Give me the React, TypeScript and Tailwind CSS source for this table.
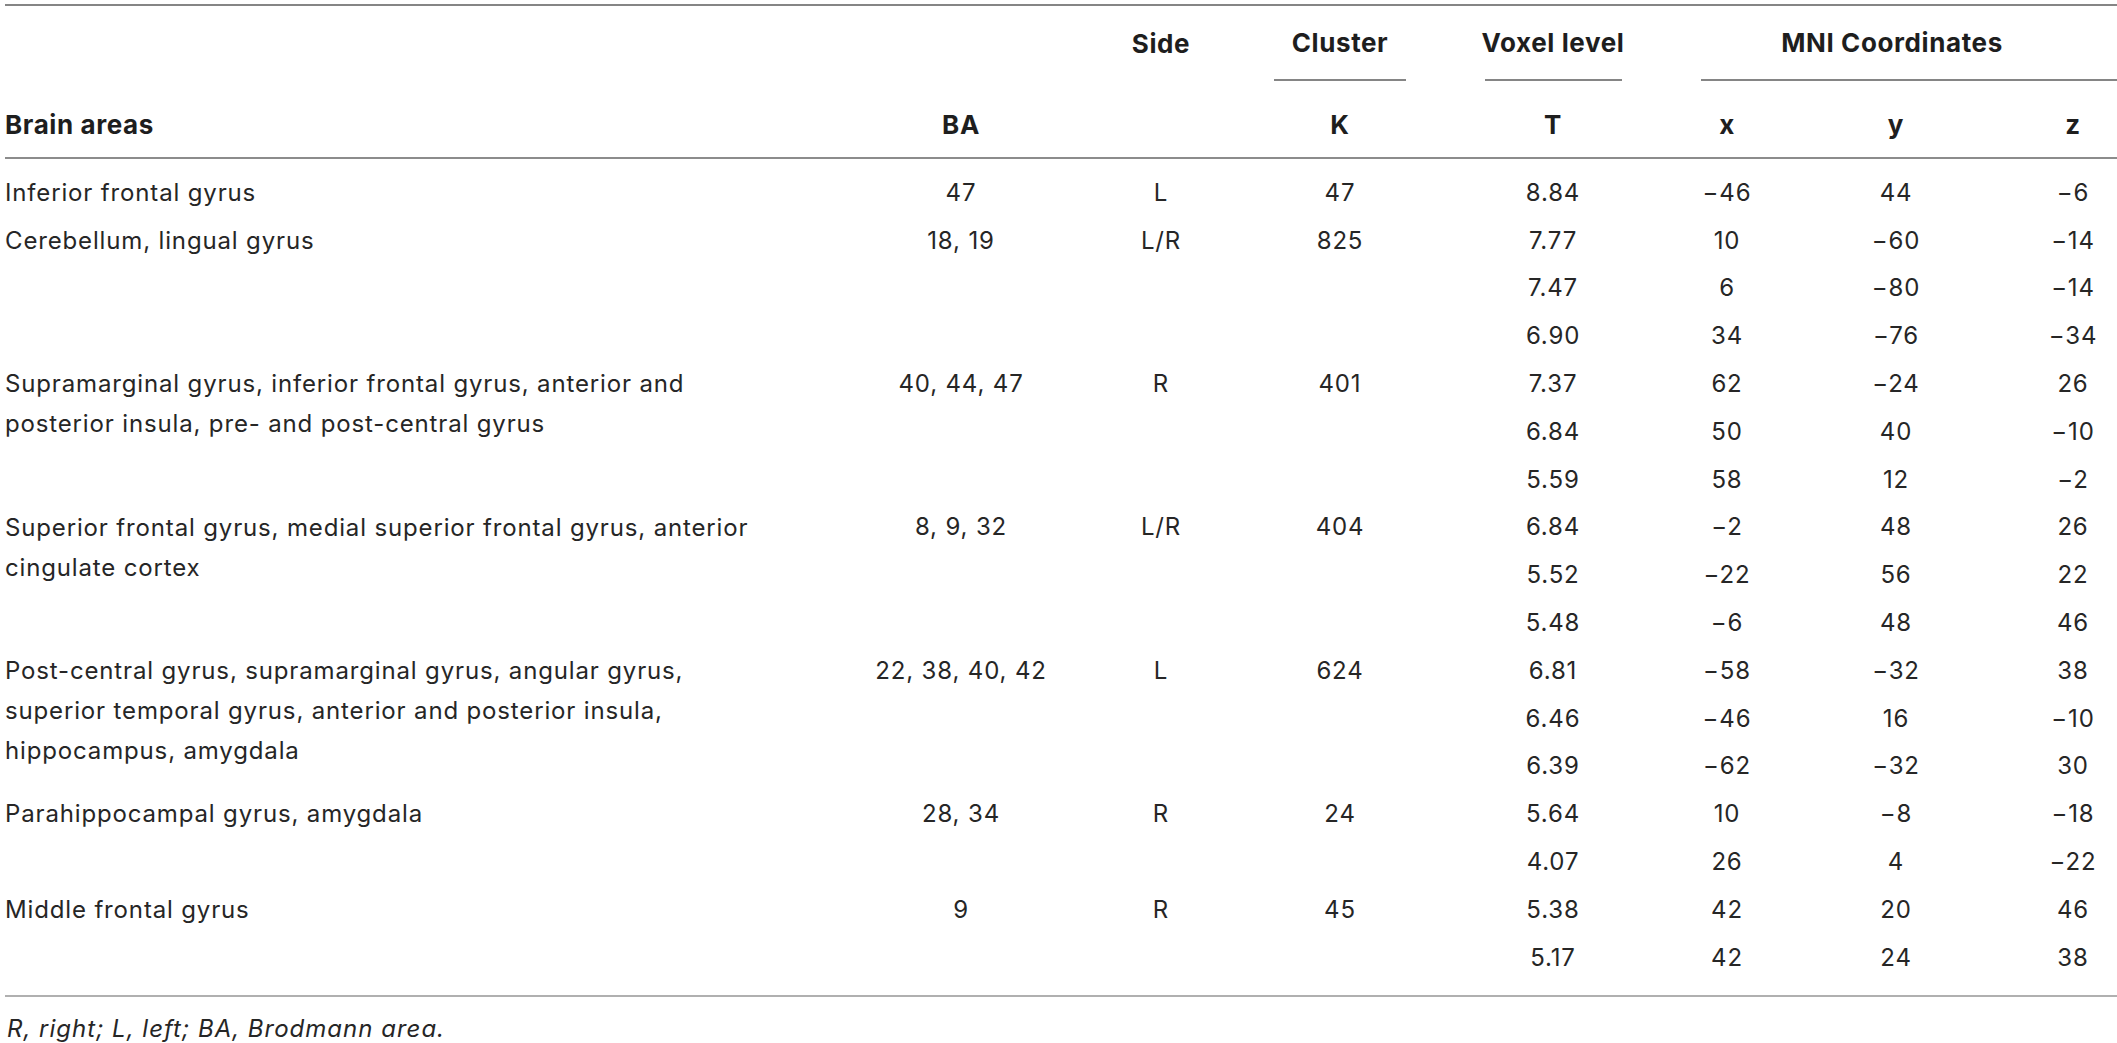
import React from "react";

type Sub = [string, string, string, string];
type Group = { area: string[]; ba: string; side: string; k: string; subs: Sub[] };

const groups: Group[] = [
  { area: ["Inferior frontal gyrus"], ba: "47", side: "L", k: "47", subs: [["8.84", "\u221246", "44", "\u22126"]] },
  {
    area: ["Cerebellum, lingual gyrus"], ba: "18, 19", side: "L/R", k: "825",
    subs: [["7.77", "10", "\u221260", "\u221214"], ["7.47", "6", "\u221280", "\u221214"], ["6.90", "34", "\u221276", "\u221234"]],
  },
  {
    area: ["Supramarginal gyrus, inferior frontal gyrus, anterior and", "posterior insula, pre- and post-central gyrus"],
    ba: "40, 44, 47", side: "R", k: "401",
    subs: [["7.37", "62", "\u221224", "26"], ["6.84", "50", "40", "\u221210"], ["5.59", "58", "12", "\u22122"]],
  },
  {
    area: ["Superior frontal gyrus, medial superior frontal gyrus, anterior", "cingulate cortex"],
    ba: "8, 9, 32", side: "L/R", k: "404",
    subs: [["6.84", "\u22122", "48", "26"], ["5.52", "\u221222", "56", "22"], ["5.48", "\u22126", "48", "46"]],
  },
  {
    area: ["Post-central gyrus, supramarginal gyrus, angular gyrus,", "superior temporal gyrus, anterior and posterior insula,", "hippocampus, amygdala"],
    ba: "22, 38, 40, 42", side: "L", k: "624",
    subs: [["6.81", "\u221258", "\u221232", "38"], ["6.46", "\u221246", "16", "\u221210"], ["6.39", "\u221262", "\u221232", "30"]],
  },
  {
    area: ["Parahippocampal gyrus, amygdala"], ba: "28, 34", side: "R", k: "24",
    subs: [["5.64", "10", "\u22128", "\u221218"], ["4.07", "26", "4", "\u221222"]],
  },
  {
    area: ["Middle frontal gyrus"], ba: "9", side: "R", k: "45",
    subs: [["5.38", "42", "20", "46"], ["5.17", "42", "24", "38"]],
  },
];

export default function App() {
  return (
    <div className="w-[2117px] h-[1043px] bg-white text-[#262626] font-['Inter','Liberation_Sans',sans-serif] text-[24px] tracking-[0.85px] overflow-hidden">
      <div className="h-[4px]" />
      <div className="ml-[5px] h-[2px] bg-[#858585]" />
      {/* Header */}
      <div className="flex h-[75px] font-bold text-[26px] tracking-[0.6px] text-[#1e1e1e]">
        <div className="w-[862px]" />
        <div className="w-[198px]" />
        <div className="w-[202px] flex items-center justify-center leading-[30px]">Side</div>
        <div className="w-[156px] flex flex-col items-center">
          <div className="flex-1 flex items-center leading-[30px]">Cluster</div>
          <div className="w-[132px] h-[2px] bg-[#858585]" />
        </div>
        <div className="w-[270px] flex flex-col items-center">
          <div className="flex-1 flex items-center leading-[30px]">Voxel level</div>
          <div className="w-[137px] h-[2px] bg-[#858585]" />
        </div>
        <div className="w-[429px] flex flex-col">
          <div className="flex-1 flex items-center justify-center leading-[30px] pl-[13px] pr-[34px]">MNI Coordinates</div>
          <div className="ml-[13px] h-[2px] bg-[#858585]" />
        </div>
      </div>
      <div className="flex h-[76px] font-bold text-[26px] tracking-[0.6px] text-[#1e1e1e] items-end pb-[17px] leading-[30px]">
        <div className="w-[862px] pl-[5px]">Brain areas</div>
        <div className="w-[198px] text-center">BA</div>
        <div className="w-[202px]" />
        <div className="w-[156px] text-center">K</div>
        <div className="w-[270px] text-center">T</div>
        <div className="w-[78px] text-center">x</div>
        <div className="w-[260px] text-center">y</div>
        <div className="w-[91px] text-center pl-[3px]">z</div>
      </div>
      <div className="ml-[5px] h-[2px] bg-[#8c8c8c]" />
      {/* Body */}
      <div className="pt-[10px]">
        {groups.map((g, gi) => (
          <div key={gi} className="flex">
            <div className="w-[862px] pl-[5px] pt-[4px] leading-[40px]">
              {g.area.map((l, i) => (
                <div key={i}>{l}</div>
              ))}
            </div>
            <div className="w-[198px] h-[47.8px] flex items-center justify-center">{g.ba}</div>
            <div className="w-[202px] h-[47.8px] flex items-center justify-center">{g.side}</div>
            <div className="w-[156px] h-[47.8px] flex items-center justify-center">{g.k}</div>
            <div className="flex flex-col">
              {g.subs.map((s, si) => (
                <div key={si} className="flex h-[47.8px] items-center">
                  <div className="w-[270px] text-center">{s[0]}</div>
                  <div className="w-[78px] text-center">{s[1]}</div>
                  <div className="w-[260px] text-center">{s[2]}</div>
                  <div className="w-[91px] text-center pl-[3px]">{s[3]}</div>
                </div>
              ))}
            </div>
          </div>
        ))}
      </div>
      <div className="mt-[13px] ml-[5px] h-[2px] bg-[#b0b0b0]" />
      <div className="pl-[7px] pt-[12px] italic leading-[40px] tracking-[1px]">R, right; L, left; BA, Brodmann area.</div>
    </div>
  );
}
